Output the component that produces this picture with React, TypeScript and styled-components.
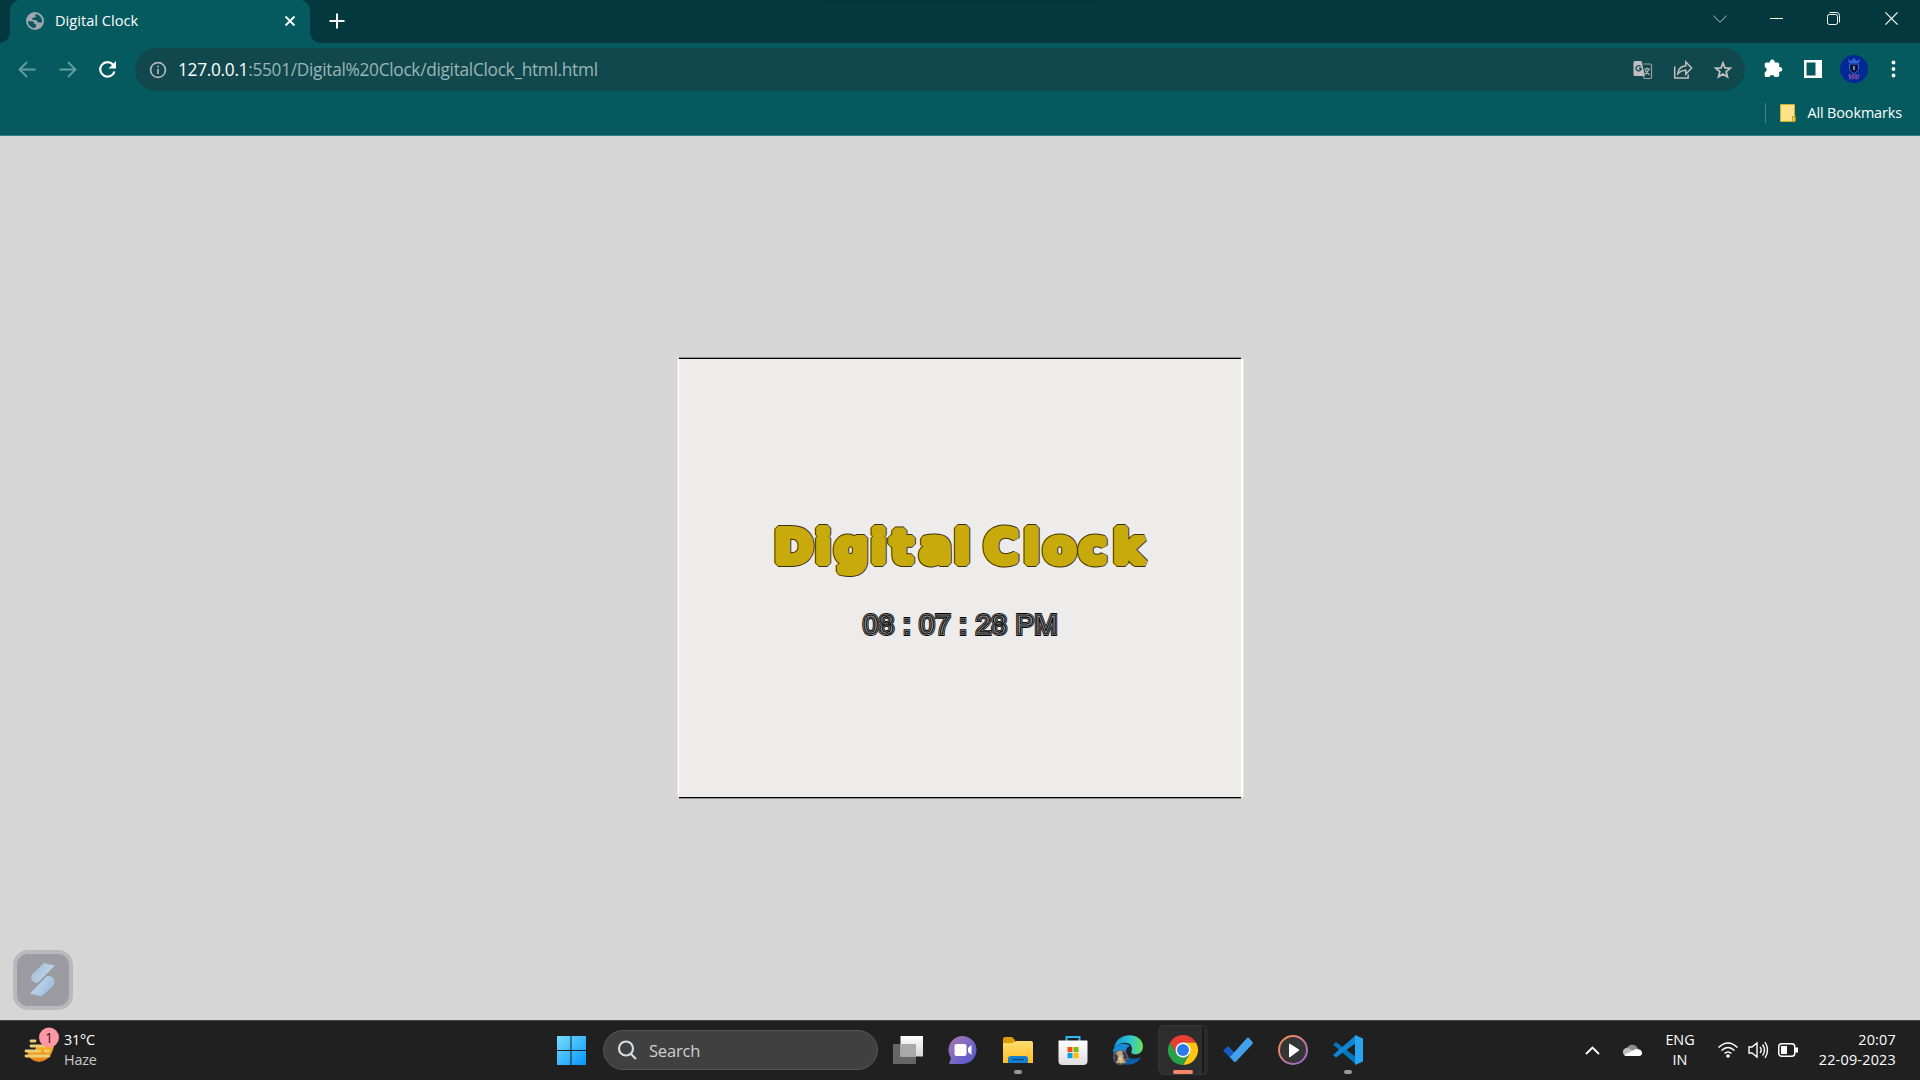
import React from "react";
import styled, { createGlobalStyle, css } from "styled-components";

const uiFont = `"Open Sans", "Noto Sans", sans-serif`;

const GlobalStyle = createGlobalStyle`
  * { box-sizing: border-box; }
  body { margin: 0; overflow: hidden; font-family: ${uiFont}; }
  svg { display: block; flex: none; overflow: visible; }
`;

const Screen = styled.div`
  width: 1920px;
  height: 1080px;
  display: flex;
  flex-direction: column;
  background: #d6d6d6;
`;

const TabStrip = styled.header`
  height: 43px;
  flex: none;
  display: flex;
  align-items: stretch;
  padding-left: 10px;
  background: linear-gradient(#023439, #03383e) 824px 0 / 272px 4px no-repeat #03383e;
  color: #fff;
`;

const Tab = styled.div`
  position: relative;
  width: 300px;
  display: flex;
  align-items: center;
  padding: 0 14px 2px 16px;
  background: #055a60;
  border-radius: 10px 10px 0 0;
  &::before, &::after {
    content: "";
    position: absolute;
    bottom: 0;
    width: 10px;
    height: 10px;
  }
  &::before { left: -10px; background: radial-gradient(circle at 0 0, transparent 9.5px, #055a60 10px); }
  &::after { right: -10px; background: radial-gradient(circle at 100% 0, transparent 9.5px, #055a60 10px); }
`;

const TabTitle = styled.span`
  margin-left: 11px;
  flex: 1;
  padding-bottom: 2px;
  font-size: 14.6px;
  letter-spacing: 0.02px;
`;

const NewTab = styled.div`
  width: 54px;
  display: flex;
  align-items: center;
  justify-content: center;
  padding-bottom: 1px;
`;

const WindowButtons = styled.div`
  margin-left: auto;
  display: grid;
  grid-template-columns: 57px 57px 57px 58px;
  padding-bottom: 6px;
  align-items: center;
  justify-items: center;
`;

const Toolbar = styled.div`
  height: 53px;
  flex: none;
  display: flex;
  align-items: center;
  padding: 0 24px 0 14px;
  background: #055a60;
`;

const NavButtons = styled.div`
  width: 121px;
  display: flex;
  align-items: center;
  gap: 14px;
`;

const Omnibox = styled.div`
  width: 1610px;
  flex: none;
  height: 43px;
  display: flex;
  align-items: center;
  padding: 0 12px 0 14px;
  border-radius: 22px;
  background: #11484d;
`;

const Url = styled.span`
  margin-left: 11px;
  flex: 1;
  font-size: 17.3px;
  letter-spacing: -0.3px;
  color: #9bb5b8;
  b { font-weight: 400; color: #fff; }
`;

const OmniIcons = styled.div`
  display: flex;
  align-items: center;
  gap: 20px;
`;

const Actions = styled.div`
  margin-left: auto;
  display: grid;
  grid-template-columns: 40px 36px 51px 5px;
  align-items: center;
`;

const Bookmarks = styled.div`
  height: 40px;
  flex: none;
  display: flex;
  align-items: flex-start;
  justify-content: flex-end;
  padding: 7px 18px 0 0;
  background: #055a60;
  border-bottom: 1px solid #357d83;
`;

const Divider = styled.i`
  width: 1px;
  height: 20px;
  margin-right: 14px;
  background: #478389;
`;

const BookmarkText = styled.span`
  margin-left: 11px;
  font-size: 14.4px;
  line-height: 20px;
  letter-spacing: -0.1px;
  color: #fff;
`;

const Page = styled.main`
  position: relative;
  flex: 1;
  display: flex;
  justify-content: center;
  align-items: flex-start;
  padding: 223px 0 0;
`;

const Card = styled.section`
  width: 562px;
  height: 438px;
  display: flex;
  flex-direction: column;
  align-items: center;
  padding-top: 151px;
  background: #eeecea;
  box-shadow:
    0 -1px #000, 0 1px #000,
    0 -2px #969696, 0 2px #969696,
    -1px 0 #fff, 2px 0 #fff,
    -2px 0 #e6e6e6, 3px 0 #e6e6e6;
`;

const Heading = styled.h1`
  margin: 0;
  height: 94px;
  font-family: "DejaVu Sans", sans-serif;
  font-size: 47px;
  line-height: 72px;
  font-weight: 700;
`;

const ExtrasCorner = styled.div`
  position: absolute;
  left: 13px;
  bottom: 10px;
  width: 60px;
  height: 60px;
  display: grid;
  place-items: center;
  border: 4px solid #b8b8bd;
  border-radius: 15px;
  background: #9b9ba1;
`;

const Taskbar = styled.footer`
  height: 60px;
  flex: none;
  display: grid;
  grid-template-columns: 540px 860px 1fr;
  background: #202020;
  border-top: 1px solid #454747;
  color: #fff;
`;

const Weather = styled.div`
  display: flex;
  padding: 6px 0 0 24px;
`;

const WeatherText = styled.div`
  margin: 3px 0 0 4px;
  font-size: 14.4px;
  line-height: 20px;
  letter-spacing: -0.2px;
  span { display: block; color: #c9c9c9; }
`;

const Apps = styled.div`
  display: flex;
  align-items: center;
  padding-left: 16px;
`;

const SearchBox = styled.div`
  width: 275px;
  height: 40px;
  flex: none;
  margin: 0 2px 1px 16px;
  display: flex;
  align-items: center;
  gap: 12px;
  padding: 0 14px;
  border: 1px solid #555;
  border-radius: 20px;
  background: #404040;
  color: #cfcfcf;
  font-size: 16.5px;
  letter-spacing: -0.2px;
`;

const AppButton = styled.div<{ $state?: "open" | "active" }>`
  width: 55px;
  height: 59px;
  flex: none;
  display: flex;
  flex-direction: column;
  align-items: center;
  padding-top: 14px;
  &::after {
    content: "";
    margin-top: 5px;
    width: ${(p) => (p.$state === "active" ? 20 : 8)}px;
    height: 4px;
    border-radius: 2px;
    background: ${(p) => (p.$state === "active" ? "#f5856b" : p.$state ? "#999" : "transparent")};
  }
  ${(p) => p.$state === "active" && css`
    height: 50px;
    width: 50px;
    margin: 0 2px 1px 3px;
    padding: 9px 0 0 9px;
    border: 1px solid #373737;
    border-right: 0;
    border-radius: 6px;
    background: linear-gradient(90deg, #2d2d2d 43px, #1c1c1c 43px 45px, #2b2b2b 45px);
    align-items: flex-start;
    &::after { margin-left: 5px; }
  `}
`;

const Tray = styled.div`
  display: flex;
  align-items: center;
  justify-content: flex-end;
  padding-right: 24px;
`;

const TrayIcons = styled.div`
  display: flex;
  align-items: center;
  gap: 10px;
  padding-bottom: 1px;
`;

const TrayLeft = styled(TrayIcons)`
  gap: 22px;
`;

const TrayText = styled.div<{ $align: string; $w: number }>`
  width: ${(p) => p.$w}px;
  padding-bottom: 2px;
  font-size: 14.4px;
  line-height: 20px;
  letter-spacing: ${(p) => (p.$align === "right" ? 0.22 : -0.05)}px;
  text-align: ${(p) => p.$align};
`;

const Globe = () => (
  <svg width="18" height="18" viewBox="0 0 18 18">
    <circle cx="9" cy="9" r="9" fill="#9fa6ad" />
    <path d="M1.900 9.200h3.600c2 0 2.800 1 2.800 2.800h1.600v2.200c0 1-.8 1.300-1.300 1.900A7.200 7.200 0 0 1 1.900 9.200zM9.400 1.900c-.6 1-.2 1.700.8 1.900-.1 1.300-1 1.400-2.100 1.500-.6 1-1.500 1-2.200 1.300.2 1.400 1.400 1.400 3.300 1.400 1.800 0 2 1.100 2.700 2.200.8.500 2 .4 3.900.4A7.200 7.200 0 0 0 9.400 1.900z" fill="#055a60" />
  </svg>
);

const iconLine = { stroke: "#c3bfc0", fill: "none", strokeWidth: 1.5 };

const Title = ({ color, stroke }: { color: string; stroke: number }) => (
  <g fill="#c9aa0c" stroke={color} strokeWidth={stroke} strokeLinejoin="bevel">
    <text x="5.9 46.9 66.6 102.6 122.5 151.8 185.9" y="53">Digital</text>
    <text x="216 255.6 275.600 311 344.900" y="53">Clock</text>
  </g>
);

const inlineLayers = [
  { fill: "#050505", stroke: "#050505", strokeWidth: 3.8 },
  { fill: "#b4b2b0", stroke: "#b4b2b0", strokeWidth: 2.1 },
  { fill: "#9a9ca0", stroke: "#050505", strokeWidth: 1.1 },
];

export default function App() {
  return (
    <>
      <GlobalStyle />
      <Screen>
        <TabStrip>
          <Tab>
            <Globe />
            <TabTitle>Digital Clock</TabTitle>
            <svg width="12" height="12" viewBox="0 0 12 12"><path d="m1.500 1.500 9 9m0-9-9 9" stroke="#fff" strokeWidth="1.800" /></svg>
          </Tab>
          <NewTab><svg width="16" height="16" viewBox="0 0 16 16"><path d="M8 .5v15M.5 8h15" stroke="#fff" strokeWidth="2" /></svg></NewTab>
          <WindowButtons>
            <svg width="14" height="8" viewBox="0 0 14 8"><path d="M.5.8 7 7.200 13.500.8" fill="none" stroke="#b9c8ca" /></svg>
            <svg width="13" height="1"><path d="M0 .5h13" stroke="#fff" /></svg>
            <svg width="13" height="13" viewBox="0 0 13 13" fill="none" stroke="#fff"><rect x=".5" y="2.500" width="10" height="10" rx="1.800" /><path d="M2.500.5h7a3 3 0 0 1 3 3v7" /></svg>
            <svg width="13" height="13" viewBox="0 0 13 13"><path d="m.4.4 12.200 12.200m0-12.200L.4 12.600" stroke="#fff" strokeWidth="1.200" /></svg>
          </WindowButtons>
        </TabStrip>
        <Toolbar>
          <NavButtons>
            <svg width="26" height="20" viewBox="0 0 26 20" fill="none" stroke="#639da0" strokeWidth="1.800"><path d="M21.500 9.500H6M13 2 5.500 9.500 13 17" /></svg>
            <svg width="26" height="20" viewBox="0 0 26 20" fill="none" stroke="#639da0" strokeWidth="1.800"><path d="M5.500 9.500H21M14 2l7.500 7.500L14 17" /></svg>
            <svg width="26" height="20" viewBox="0 0 26 20"><path d="M19 4.500A7.300 7.300 0 1 0 20.500 11.500" fill="none" stroke="#fff" strokeWidth="2.200" /><path d="M22 1v7.500h-7.500z" fill="#fff" /></svg>
          </NavButtons>
          <Omnibox>
            <svg width="18" height="18" viewBox="0 0 18 18" fill="none" stroke="#b5b4ba" strokeWidth="1.700"><circle cx="9" cy="9" r="7.400" /><path d="M9 8v5M9 4.800v1.800" /></svg>
            <Url><b>127.0.0.1</b>:5501/Digital%20Clock/digitalClock_html.html</Url>
            <OmniIcons>
              <svg width="20" height="20" viewBox="0 0 20 20"><path d="M2 1h6.500L12 16H2a1.500 1.500 0 0 1-1.500-1.500v-12A1.500 1.500 0 0 1 2 1z" fill="#c3bfc0" /><path d="M9.500 4h7.800a1.200 1.200 0 0 1 1.200 1.200v12a1.200 1.200 0 0 1-1.200 1.300h-6l-1.300-3" fill="none" stroke="#949b9d" strokeWidth="1.200" /><path d="M7.600 6.600A2.600 2.600 0 1 0 8.200 8.500H5.800" fill="none" stroke="#11484d" strokeWidth="1.300" /><path d="M11 9h6M14 7.600V9m1.800.2c-.5 2-2 3.800-3.800 5m.3-4c.8 2 2.200 3.500 4.200 4.500" {...iconLine} strokeWidth="1.100" /></svg>
              <svg width="20" height="20" viewBox="0 0 20 20"><path d="M1.700 6.500V18h13.500v-3.500M12.800 1.800v4c-4.500.4-7.500 3-8 8 2.300-2.700 4.400-3.600 8-3.600v4L18.600 8z" {...iconLine} /></svg>
              <svg width="20" height="20" viewBox="0 0 20 20"><path d="m10 3 1.900 4.800 5.300.4-4 3.400 1.200 5.200-4.400-2.800-4.400 2.800 1.200-5.200-4-3.400 5.300-.4z" {...iconLine} strokeWidth="1.800" /></svg>
            </OmniIcons>
          </Omnibox>
          <Actions>
            <svg width="19" height="19" viewBox="0 0 19 19"><path d="M2.300 3.500H6a2.400 2.400 0 1 1 4.600 0h3a1.600 1.600 0 0 1 1.600 1.600v3a2.400 2.400 0 1 1 0 4.600v3.600a1.700 1.700 0 0 1-1.600 1.700h-3a2.700 2.700 0 0 0-5.200 0H2.300A1.600 1.600 0 0 1 .7 16.400v-3.200a2.700 2.700 0 0 0 0-5.200V5.100a1.600 1.600 0 0 1 1.600-1.600z" fill="#fff" transform="translate(0 -1)" /></svg>
            <svg width="18" height="18"><path fillRule="evenodd" d="M0 0h18v18H0zM2.500 2.500v13h9v-13z" fill="#fff" transform="translate(0 -1)" /></svg>
            <svg width="28" height="28" viewBox="0 0 28 28"><g transform="translate(0 -1)"><circle cx="14" cy="14" r="14" fill="#002995" /><path d="m8 4 3 2 3-3 3 3 3-2-1 4H9z" fill="#3565ce" /><path d="M9.500 9h9v6L14 19l-4.500-4z" fill="#07133d" stroke="#3f62cf" /><path d="M13 11h2v4h-2z" fill="#79869a" /><path d="M8.500 20.500h11M9 23h10" stroke="#6a4aa0" strokeWidth="2.400" strokeDasharray="2.500 .6" /></g></svg>
            <svg width="5" height="18" fill="#fff"><circle cx="2.500" cy="1.500" r="1.900" /><circle cx="2.500" cy="8" r="1.900" /><circle cx="2.500" cy="14.500" r="1.900" /></svg>
          </Actions>
        </Toolbar>
        <Bookmarks>
          <Divider />
          <svg width="16" height="20" viewBox="0 0 16 20"><path d="M.5 1.500h14v11h.5v6H.5z" fill="#ffe38a" stroke="#d8ad28" /><path d="M12.500 18v-4.500H15v5h-2.500" fill="#ffda63" stroke="#c59a20" /></svg>
          <BookmarkText>All Bookmarks</BookmarkText>
        </Bookmarks>
        <Page>
          <Card>
            <Heading>
              <svg width="384" height="72">
                <Title color="#383109" stroke={8} />
                <g aria-hidden><Title color="#c9aa0c" stroke={6} /></g>
              </svg>
            </Heading>
            <svg width="200" height="38" fontFamily="Liberation Sans" fontSize="27.500" strokeLinejoin="miter">
              {inlineLayers.map((layer, i) => (
                <text key={i} x="3" y="30" textLength="194.500" aria-hidden={i > 0} {...layer}>08 : 07 : 28 PM</text>
              ))}
            </svg>
          </Card>
          <ExtrasCorner>
            <svg width="26" height="34" viewBox="0 0 26 34"><defs><linearGradient id="s" x2="1" y2="1"><stop stopColor="#9fb8d0" /><stop offset=".5" stopColor="#b8d1e7" /><stop offset="1" stopColor="#8fb3d8" /></linearGradient></defs><path d="M14 0 25 2.500 9 18.500Q6 21 2.500 18-.5 14 3 10.500zM0 30.500 15.500 14.500Q18 12 22 14q5 4 1 9L11.500 33.500z" fill="url(#s)" /></svg>
          </ExtrasCorner>
        </Page>
        <Taskbar>
          <Weather>
            <svg width="36" height="36" viewBox="0 0 36 36"><defs><linearGradient id="sun" x2="0" y2="1"><stop stopColor="#f8b722" /><stop offset="1" stopColor="#e67c1c" /></linearGradient></defs><path d="M3 23h8l2-5h17q-1 9-7 14-8 6-16 0-3-3-4-9z" fill="url(#sun)" /><path d="M7 14h4M7 19h13M2 24h14M21 24h4M2 29h23" stroke="#eccd70" strokeWidth="2.800" strokeLinecap="round" /><circle cx="25" cy="10.500" r="10" fill="#ff98a4" /><text x="25" y="15.500" fontSize="14" textAnchor="middle" fill="#321e22">1</text></svg>
            <WeatherText>31°C<span>Haze</span></WeatherText>
          </Weather>
          <Apps>
            <svg width="31" height="30" viewBox="0 0 31 30"><defs><linearGradient id="w" x2="1" y2="1"><stop stopColor="#78deff" /><stop offset="1" stopColor="#0494fb" /></linearGradient></defs><path fill="url(#w)" d="M1 0h13.500v14H1zm14.500 0H30v14H15.500zM1 15h13.500v14H1zm14.500 0H30v14H15.500z" /></svg>
            <SearchBox><svg width="19" height="20" viewBox="0 0 19 20" fill="none" stroke="#d7dbdf" strokeWidth="2.200"><circle cx="8" cy="8.500" r="7" /><path d="m13 14 5 5" /></svg>Search</SearchBox>
            <AppButton><svg width="30" height="30" viewBox="0 0 30 30"><defs><linearGradient id="tv" x2="0" y2="1"><stop stopColor="#fff" /><stop offset="1" stopColor="#d4d4d4" /></linearGradient></defs><path d="M0 9h23v20H0z" fill="#666" /><path d="M7.500 1H30v20.500H7.500z" fill="url(#tv)" /><path d="M7.500 9H23v12.500H7.500z" fill="#aaa" /></svg></AppButton>
            <AppButton><svg width="30" height="30" viewBox="0 0 30 30"><defs><linearGradient id="m" x2="1" y2="1"><stop stopColor="#a87bb0" /><stop offset="1" stopColor="#5054d2" /></linearGradient></defs><path d="m1 29 2-6A14 14 0 1 1 15 29z" fill="url(#m)" /><rect x="6.500" y="9" width="12" height="12" rx="2" fill="#fff" /><path d="m20 13 3.500-3v10L20 17z" fill="#fff" /></svg></AppButton>
            <AppButton $state="open"><svg width="30" height="30" viewBox="0 0 30 30"><defs><linearGradient id="f" x2="0" y2="1"><stop stopColor="#ffdc70" /><stop offset="1" stopColor="#ffbe1f" /></linearGradient></defs><path d="M0 4q0-2 2-2h7l3 3v6H0z" fill="#df9b00" /><path d="M0 8h9l4-2h15q2 0 2 2v20H0z" fill="url(#f)" /><path d="M5 28v-4q0-3 3-3h14q3 0 3 3v4z" fill="#1580d0" /><path d="M9 24.500h12" stroke="#075390" strokeWidth="1.500" /></svg></AppButton>
            <AppButton><svg width="30" height="30" viewBox="0 0 30 30"><defs><linearGradient id="st" x2="0" y2="1"><stop stopColor="#fff" /><stop offset="1" stopColor="#dedede" /></linearGradient></defs><path d="M8.500 6V2h13v4" fill="none" stroke="#2bb9ed" strokeWidth="2" /><path d="M.5 5.500h29V26q0 4-4 4h-21q-4 0-4-4z" fill="url(#st)" /><path d="M9.500 12h5v5.200h-5z" fill="#f34f1c" /><path d="M15.500 12h5v5.200h-5z" fill="#7fba00" /><path d="M9.500 18h5v5.200h-5z" fill="#00a3ee" /><path d="M15.500 18h5v5.200h-5z" fill="#ffba01" /></svg></AppButton>
            <AppButton><svg width="30" height="30" viewBox="0 0 30 30"><defs><linearGradient id="e"><stop stopColor="#1499dc" /><stop offset=".6" stopColor="#31c8cc" /><stop offset="1" stopColor="#6be253" /></linearGradient></defs><path d="M1 13C4-4 29-3 30 11c0 7-5 9-10 8-3-1-1-3-1-5 0-8-12-8-18-1z" fill="url(#e)" /><path d="M0 16C2 8 12 7 17 11c-6 1-5 12 3 13 3 0 5-1 8-2-3 7-12 9-18 7C3 27 0 22 0 16z" fill="#0b60ae" /><path d="M0 16C2 8 12 7 17 11c-4 1-5 5-4 9z" fill="#168cd6" /><circle cx="7.500" cy="22.500" r="7.500" fill="#625959" /><path d="M3 18q4-5 9 0l-2 5 3 5H3l3-6z" fill="#bca37f" /><path d="M2 20q2 4 0 6M10 17l3 6" stroke="#2c3157" strokeWidth="2" fill="none" /><path d="m5 23 2-3 3 4-2 5z" fill="#dfc58e" /></svg></AppButton>
            <AppButton $state="active"><svg width="30" height="30" viewBox="0 0 30 30"><path d="M2 7.500A15 15 0 0 1 28 7.500H15L8.500 19z" fill="#e93e31" /><path d="M28 7.500A15 15 0 0 1 15 30L21.500 19 15 7.500z" fill="#ffc414" /><path d="M2 7.500A15 15 0 0 0 15 30l6.500-11h-13z" fill="#2aa148" /><circle cx="15" cy="15" r="7.500" fill="#fff" /><circle cx="15" cy="15" r="6" fill="#287be9" /></svg></AppButton>
            <AppButton><svg width="30" height="30" viewBox="0 0 30 30"><path d="m0 15.500 5-4.500 10 10-4 6z" fill="#185abd" /><path d="M7 22 24 3q1-1 2 0l3.500 4q.5 1 0 2L13 26.500q-1 1-2 0z" fill="#42a1ec" /></svg></AppButton>
            <AppButton><svg width="30" height="30" viewBox="0 0 30 30"><defs><linearGradient id="p" x2="1" y2="1"><stop stopColor="#ff9142" /><stop offset="1" stopColor="#9563df" /></linearGradient></defs><circle cx="15" cy="15" r="14" fill="#353535" stroke="url(#p)" strokeWidth="2" /><path d="m11.500 9 9.500 6-9.500 7z" fill="#fff" stroke="#fff" strokeLinejoin="round" /></svg></AppButton>
            <AppButton $state="open"><svg width="30" height="30" viewBox="0 0 30 30"><path d="m0 9.500 3-2.500 20 15v7.500z" fill="#0377bd" /><path d="m0 20 3 2.500L23 8V0z" fill="#0f86cf" /><path d="m22 0 8 3.500v23L22 30z" fill="#28a5f2" /></svg></AppButton>
          </Apps>
          <Tray>
            <TrayLeft>
              <svg width="15" height="9" viewBox="0 0 15 9"><path d="m1 8 6.500-6.500L14 8" fill="none" stroke="#fff" strokeWidth="1.800" /></svg>
              <svg width="20" height="14" viewBox="0 0 20 14"><path d="M5 5a6 6 0 0 1 11 1l-6 4z" fill="#8b8b8b" /><path d="M4 13a4 4 0 1 1 2-8l8 4-7 4z" fill="#bebebe" /><path d="M2 12 14 6q6 0 6 4 0 3-3 3H4z" fill="#fff" /></svg>
            </TrayLeft>
            <TrayText $w={76} $align="center">ENG<br />IN</TrayText>
            <TrayIcons>
              <svg width="20" height="16" viewBox="0 0 20 16" fill="none" stroke="#fff" strokeWidth="1.500"><path d="M.5 5.500q9.500-9 19 0M3.500 8.500q6.500-6 13 0M6.500 11.500q3.500-3 7 0" /><circle cx="10" cy="14" r="1.800" fill="#fff" stroke="none" /></svg>
              <svg width="20" height="18" viewBox="0 0 20 18" fill="none" stroke="#fff" strokeWidth="1.400"><path d="M1 6h3l5-4v14l-5-4H1zM12 6q2.500 3 0 6M14.500 3.500q4 5.500 0 11M17 1q5 8 0 16" /></svg>
              <svg width="20" height="14" viewBox="0 0 20 14"><rect x=".75" y=".75" width="16" height="12.500" rx="3" fill="none" stroke="#fff" strokeWidth="1.500" /><path d="M3 3h6v8H3zM17 4.500h3v5h-3z" fill="#fff" /></svg>
            </TrayIcons>
            <TrayText $w={98} $align="right">20:07<br />22-09-2023</TrayText>
          </Tray>
        </Taskbar>
      </Screen>
    </>
  );
}
